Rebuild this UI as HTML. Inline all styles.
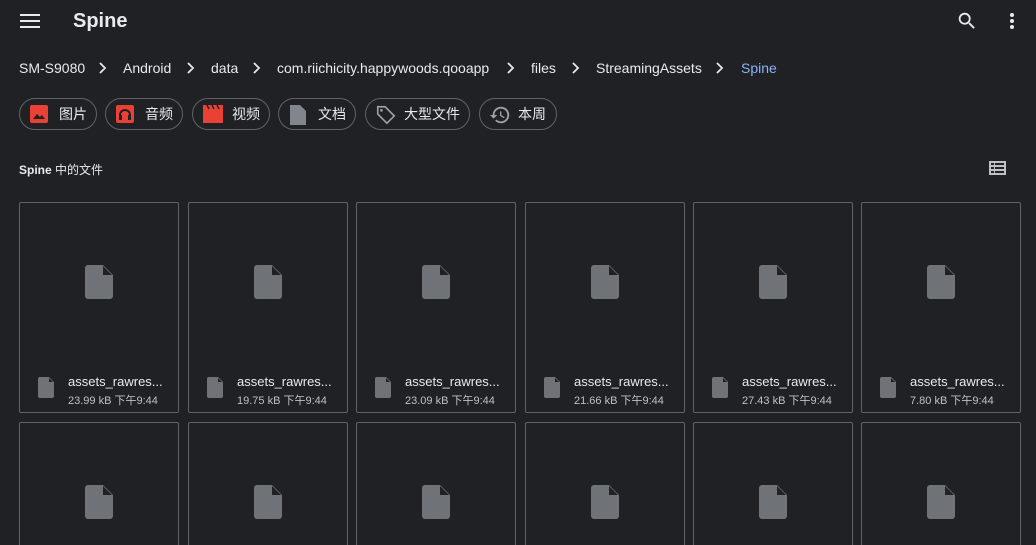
<!DOCTYPE html><html style="height:545px;overflow:hidden"><head><style>
body{margin:0;width:1036px;height:545px;background:#202124;overflow:hidden;font-family:"Liberation Sans","Noto Sans CJK SC",sans-serif;color:#e8eaed;position:relative}
.a{position:absolute}
.bc{position:absolute;top:60px;font-size:14px;white-space:nowrap}
.chip{position:absolute;top:98px;height:30px;border:1px solid #5f6368;border-radius:16px;box-sizing:content-box;font-size:14px;color:#e8eaed;line-height:30px}
.chip svg{position:absolute;left:9px;top:5px}
.chip span{position:absolute;left:38px}
.card{position:absolute;width:158px;height:209px;border:1px solid #5f6368;border-radius:2px}
.card.r2{height:122px;border-bottom:none;border-radius:2px 2px 0 0}
.card .big{position:absolute;left:65px;top:62px}
.card .sm{position:absolute;left:18px;top:174px}
.card .n{position:absolute;left:48px;top:171px;font-size:13px;color:#e8eaed;white-space:nowrap}
.card .m{position:absolute;left:48px;top:189px;font-size:11px;color:#bdc1c6;white-space:nowrap}
</style></head><body>
<svg class="a" style="left:20px;top:13px" width="20" height="16"><path d="M0 2h20M0 8h20M0 14h20" stroke="#e8eaed" stroke-width="2"/></svg>
<div class="a" style="left:73px;top:10px;font-size:20px;font-weight:bold">Spine</div>
<svg class="a" style="left:956px;top:10px" width="22" height="22" viewBox="0 0 24 24"><path fill="#e8eaed" d="M15.5 14h-.79l-.28-.27A6.47 6.47 0 0016 9.5 6.5 6.5 0 109.5 16c1.610 0 3.09-.59 4.230-1.57l.27.28v.79l5 4.99L20.49 19l-4.99-5zm-6 0C7.01 14 5 11.99 5 9.5S7.01 5 9.5 5 14 7.01 14 9.5 11.99 14 9.5 14z"/></svg>
<svg class="a" style="left:1009px;top:12px" width="6" height="18"><circle cx="3" cy="3" r="2" fill="#e8eaed"/><circle cx="3" cy="9" r="2" fill="#e8eaed"/><circle cx="3" cy="15" r="2" fill="#e8eaed"/></svg>
<div class="bc" style="left:19px">SM-S9080</div>
<div class="bc" style="left:123px">Android</div>
<div class="bc" style="left:211px">data</div>
<div class="bc" style="left:277px">com.riichicity.happywoods.qooapp</div>
<div class="bc" style="left:531px">files</div>
<div class="bc" style="left:596px">StreamingAssets</div>
<div class="bc" style="left:741px;color:#8ab4f8">Spine</div>
<svg class="a" style="left:0;top:60px" width="760" height="16"><g fill="none" stroke="#e8eaed" stroke-width="1.8"><path d="M100 3l5 5-5 5M188 3l5 5-5 5M254 3l5 5-5 5M508 3l5 5-5 5M573 3l5 5-5 5M717 3l5 5-5 5"/></g></svg>
<div class="chip" style="left:19px;width:76px"><svg width="20" height="20"><rect x="1" y="1" width="18" height="18" rx="2" fill="#e94235"/><path d="M4 15l4-5 3 3 2-2 3 4z" fill="#202124"/></svg><span style="left:39px">图片</span></div>
<div class="chip" style="left:105px;width:76px"><svg width="20" height="20"><rect x="1" y="1" width="18" height="18" rx="2" fill="#e94235"/><path d="M5 15v-4a5 5 0 0110 0v4" fill="none" stroke="#202124" stroke-width="2"/><rect x="4" y="11" width="3" height="5" fill="#202124"/><rect x="13" y="11" width="3" height="5" fill="#202124"/></svg><span style="left:39px">音频</span></div>
<div class="chip" style="left:192px;width:76px"><svg width="22" height="20"><rect x="1" y="5" width="20" height="14" fill="#e94235"/><path d="M1 1h20v4H1z" fill="#e94235"/><path d="M5 1l2 4M10 1l2 4M15 1l2 4" stroke="#202124" stroke-width="1.5"/></svg><span style="left:39px">视频</span></div>
<div class="chip" style="left:278px;width:76px"><svg width="20" height="22"><path d="M2 1h10l6 6v14H2z" fill="#80868b"/></svg><span style="left:39px">文档</span></div>
<div class="chip" style="left:365px;width:103px"><svg width="22" height="22" viewBox="0 0 24 24"><path fill="none" stroke="#9aa0a6" stroke-width="1.8" d="M3 3h8l10 10-8 8L3 11z"/><circle cx="7" cy="7" r="1.5" fill="#9aa0a6"/></svg><span>大型文件</span></div>
<div class="chip" style="left:479px;width:76px"><svg width="22" height="22" viewBox="0 0 24 24"><path fill="#9aa0a6" d="M13 3a9 9 0 00-9 9H1l3.9 3.9.1.1L9 12H6a7 7 0 117 7c-1.9 0-3.7-.8-4.9-2.1l-1.4 1.4A9 9 0 1013 3zm-1 5v5l4.3 2.5.7-1.2-3.5-2.1V8z"/></svg><span>本周</span></div>
<div class="a" style="left:19px;top:161px;font-size:12px;font-weight:bold">Spine <span style="font-weight:normal">中的文件</span></div>
<svg class="a" style="left:989px;top:161px" width="17" height="14"><g fill="#bdc1c6"><rect x="0" y="0" width="17" height="14"/></g><g fill="#202124"><rect x="2" y="2" width="3" height="2"/><rect x="6" y="2" width="9" height="2"/><rect x="2" y="6" width="3" height="2"/><rect x="6" y="6" width="9" height="2"/><rect x="2" y="10" width="3" height="2"/><rect x="6" y="10" width="9" height="2"/></g></svg>
<div id="g"></div>
<script>
var xs=[19,188,356,525,693,861],sz=["23.99","19.75","23.09","21.66","27.43","7.80"],h="";
var big='<svg class="big" width="28" height="34" viewBox="0 0 28 34"><path d="M3 0h15l10 10v21a3 3 0 01-3 3H3a3 3 0 01-3-3V3a3 3 0 013-3z" fill="#6f7378"/><path d="M18 1l9 9h-9z" fill="#202124"/></svg>';
var sm='<svg class="sm" width="16" height="21" viewBox="0 0 16 21"><path d="M2 0h9l5 5v14a2 2 0 01-2 2H2a2 2 0 01-2-2V2a2 2 0 012-2z" fill="#6f7378"/><path d="M11 1l4 4h-4z" fill="#202124"/></svg>';
for(var r=0;r<2;r++)for(var i=0;i<6;i++){h+='<div class="card'+(r?' r2':'')+'" style="left:'+xs[i]+'px;top:'+(202+r*220)+'px">'+big+(r==0?sm+'<div class="n">assets_rawres...</div><div class="m">'+sz[i]+' kB 下午9:44</div>':'')+'</div>';}
document.getElementById("g").innerHTML=h;
</script>
</body></html>
